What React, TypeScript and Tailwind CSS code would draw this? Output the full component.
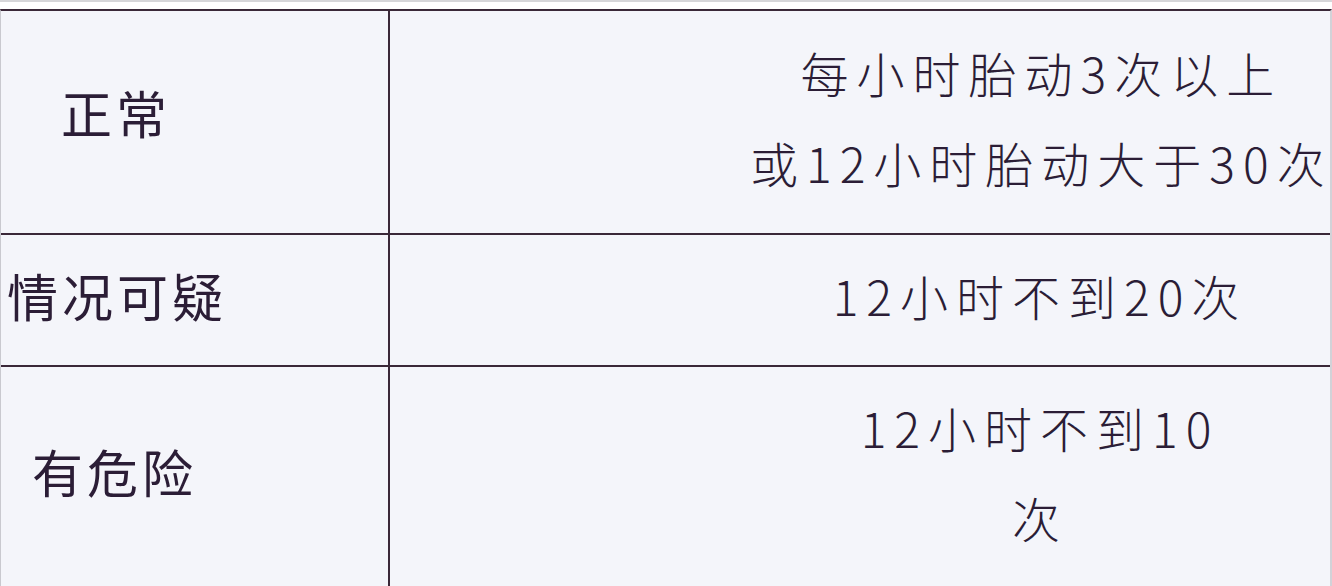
import React from 'react';

const rows = [
  { label: '正常', pad: 'pl-[60px] pb-[20px]', h: 'h-[222px]', lines: ['每小时胎动3次以上', '或12小时胎动大于30次'] },
  { label: '情况可疑', pad: 'pl-[6px] pb-[10px]', h: 'h-[132px]', lines: ['12小时不到20次'] },
  { label: '有危险', pad: 'pl-[31px] pb-[10px]', h: 'h-[221px]', lines: ['12小时不到10', '次'] },
];

export default function App() {
  return (
    <div
      className="w-[1332px] h-[586px] overflow-hidden bg-[#f4f5fa] text-[#2b1d36]"
      style={{ fontFamily: '"Noto Sans CJK SC", "Noto Sans", sans-serif' }}
    >
      {/* top strip */}
      <div className="h-[9px] bg-white border-t-[2px] border-[#d6d6d9]"></div>
      <div className="border-t-[2px] border-l border-r-[2px] border-[#3a2838] border-l-[#c9c9cf] border-r-[#d2d2d8]">
        {rows.map((r, i) => (
          <div key={i} className={`flex ${r.h} ${i > 0 ? 'border-t-[2px] border-[#3a2838]' : ''}`}>
            <div className={`w-[387px] shrink-0 flex items-center ${r.pad} text-[51px] tracking-[4px] font-normal`}>
              {r.label}
            </div>
            <div className="flex-1 border-l-[2px] border-[#3a2838] flex flex-col justify-center items-center pl-[360px] pb-[10px] text-[48px] leading-[90px] tracking-[8px] font-light whitespace-nowrap">
              {r.lines.map((l, j) => (
                <div key={j}>{l}</div>
              ))}
            </div>
          </div>
        ))}
      </div>
    </div>
  );
}
